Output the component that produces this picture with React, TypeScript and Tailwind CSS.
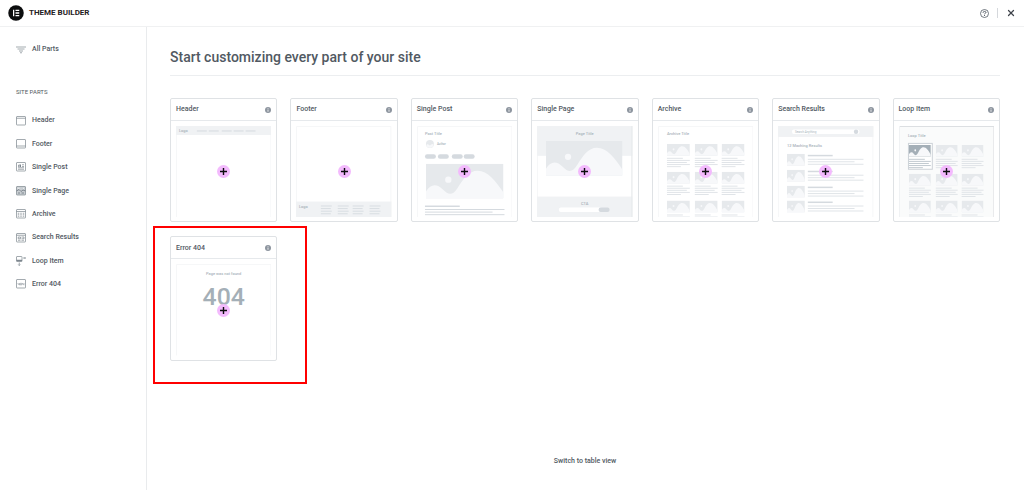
import React, { ReactNode } from "react";
import { X } from "lucide-react";

type Part = {
  title: string;
  icon: ReactNode;
  preview: ReactNode;
  highlighted?: boolean;
};

type BoxProps = { x: number; y: number; w: number; h: number };

function Picture({ x, y, w, h, dark }: BoxProps & { dark?: boolean }) {
  return (
    <svg x={x} y={y} width={w} height={h} viewBox="0 0 78 35" preserveAspectRatio="none">
      <rect width="78" height="35" fill={dark ? "#a4afb7" : "#e6e9ec"} />
      <path
        d="M0 28C5 20 11 20 17 26C23 32 27 32 32 24C38 15 43 7 52 7C62 7 70 17 78 29V35H0Z"
        fill="#f7f8fa"
      />
      <ellipse cx="22.500" cy="16" rx="3.200" ry="3.200" fill="#f7f8fa" />
    </svg>
  );
}

function Lines({ x, y, widths, step, color = "#e0e4e8" }: { x: number; y: number; widths: number[]; step: number; color?: string }) {
  return (
    <>
      {widths.map((w, i) => (
        <rect key={i} x={x} y={y + i * step} width={w} height="1" fill={color} />
      ))}
    </>
  );
}

function Label({ x, y, middle, children }: { x: number; y: number; middle?: boolean; children: ReactNode }) {
  return (
    <text x={x} y={y} fontSize="4" fontWeight="500" fill="#a9b3bb" textAnchor={middle ? "middle" : "start"}>
      {children}
    </text>
  );
}

function Frame({ children }: { children: ReactNode }) {
  return (
    <svg viewBox="0 0 96 92" className="block h-auto w-full">
      <path d="M0.500 92V0.500H95.500V92" fill="none" stroke="#f6f7f8" />
      {children}
    </svg>
  );
}

const headerPreview = (
  <Frame>
    <rect width="96" height="9" fill="#f0f2f4" />
    <Label x={3} y={6}>Logo</Label>
    {[21, 33, 46, 58, 70].map((x) => (
      <rect key={x} x={x} y="4.500" width="10" height="1" fill="#d5dadf" />
    ))}
  </Frame>
);

const footerPreview = (
  <Frame>
    <rect y="76" width="96" height="16" fill="#f0f2f4" />
    <Label x={3} y={83}>Logo</Label>
    {[25, 42, 57, 74].map((x) => (
      <Lines key={x} x={x} y={80} widths={[11, 10, 11, 10]} step={2.6} color="#d8dde2" />
    ))}
  </Frame>
);

const postPreview = (
  <Frame>
    <Label x={8} y={9}>Post Title</Label>
    <circle cx="13" cy="18" r="4" fill="#e6e9ec" />
    <path d="M9.500 19C11 17.500 12 19.500 13 19.500S15 17 16.800 19A4 4 0 0 1 9.500 20Z" fill="#f7f8fa" />
    <text x="20" y="19" fontSize="3" fontWeight="500" fill="#a9b3bb">Author</text>
    {[8, 21, 35, 47].map((x) => (
      <rect key={x} x={x} y="28.500" width="11" height="4.500" rx="2.200" fill="#d5dadf" />
    ))}
    <Picture x={9} y={38} w={78} h={35} />
    <rect x="8" y="80" width="35" height="1.500" fill="#d5dadf" />
    <Lines x={8} y={83.5} widths={[80, 68, 80]} step={2.6} color="#d5dadf" />
  </Frame>
);

const pagePreview = (
  <Frame>
    <rect width="96" height="30" fill="#f0f2f4" />
    <Label x={48} y={9} middle>Page Title</Label>
    <Picture x={9} y={15} w={77} h={35} />
    <rect y="71" width="96" height="21" fill="#f0f2f4" />
    <Label x={48} y={79} middle>CTA</Label>
    <rect x="22" y="82" width="44" height="4.500" rx="2" fill="#fff" />
    <rect x="62" y="82" width="11" height="4.500" rx="2" fill="#d5dadf" />
    <path d="M95.500 0V92" stroke="#e6e9ec" />
  </Frame>
);

const archivePreview = (
  <Frame>
    <Label x={9} y={9}>Archive Title</Label>
    {[9, 37, 64].map((x) =>
      [18, 46, 75].map((y) => (
        <g key={`${x}-${y}`}>
          <Picture x={x} y={y} w={23} h={12} />
          <Lines x={x} y={y + 14} widths={[16, 23, 20, 23, 14]} step={2.1} />
        </g>
      ))
    )}
  </Frame>
);

const searchPreview = (
  <Frame>
    <rect width="96" height="11" fill="#f0f2f4" />
    <rect x="14" y="3.500" width="68" height="4.500" rx="2" fill="#fff" />
    <text x="17" y="6.800" fontSize="3" fill="#a9b3bb">Search Anything</text>
    <circle cx="78.500" cy="5.800" r="2.200" fill="#d5dadf" />
    <Label x={9} y={21}>12 Maching Results</Label>
    {[28, 44, 60, 75].map((y) => (
      <g key={y}>
        <Picture x={9} y={y} w={18} h={12} />
        <rect x="30" y={y + 1} width="25" height="1.500" fill="#d5dadf" />
        <Lines x={30} y={y + 5} widths={[56, 47, 56]} step={2.5} />
      </g>
    ))}
  </Frame>
);

const loopPreview = (
  <Frame>
    <rect width="96" height="92" fill="#fafbfb" />
    <path d="M0 0.500H95.500V92" fill="none" stroke="#dcdfe2" />
    <path d="M0.500 0V92" stroke="#f0f2f4" />
    <Label x={9} y={11}>Loop Title</Label>
    <rect x="9.500" y="17.500" width="24" height="26" fill="#fff" stroke="#ccd2d7" />
    {[10, 37, 63].map((x) =>
      [19, 48, 75].map((y) => {
        const active = x === 10 && y === 19;
        return (
          <g key={`${x}-${y}`}>
            <Picture x={x} y={y} w={22} h={12} dark={active} />
            <Lines x={x} y={y + 14} widths={[16, 22, 20, 22, 14]} step={2.1} color={active ? "#c2cad0" : "#e0e4e8"} />
          </g>
        );
      })
    )}
  </Frame>
);

const errorPreview = (
  <Frame>
    <Label x={48} y={11} middle>Page was not found</Label>
    <text x="48" y="41" fontSize="25" fontWeight="500" fill="#a4afb7" textAnchor="middle">404</text>
  </Frame>
);

function Icon({ children }: { children: ReactNode }) {
  return (
    <svg viewBox="0 0 20 20" className="size-[10px] shrink-0" fill="none" stroke="#7d868e" strokeWidth="1.400" aria-hidden="true">
      {children}
    </svg>
  );
}

const parts: Part[] = [
  {
    title: "Header",
    icon: <Icon><rect x="1" y="1" width="18" height="17" rx="1" /><path d="M1 4.500H19" /></Icon>,
    preview: headerPreview,
  },
  {
    title: "Footer",
    icon: <Icon><rect x="1" y="1" width="18" height="17" rx="1" /><path d="M1 14H19" /></Icon>,
    preview: footerPreview,
  },
  {
    title: "Single Post",
    icon: <Icon><rect x="1" y="1" width="18" height="17" rx="1" /><path d="M5 10V6H7M12 5.500H16M12 9H16M4 11.500H16M4 14.500H16" /><path d="M7 5H10V10H7Z" fill="#7d868e" stroke="none" /></Icon>,
    preview: postPreview,
  },
  {
    title: "Single Page",
    icon: <Icon><rect x="1" y="1" width="18" height="17" rx="1" fill="#c9ced2" /><path d="M1 10L6 7L10 11L14 8L19 10M4 14H8M11 14H16" strokeWidth="2" /><path d="M3 4.500H7M14 4.500H16" stroke="#fff" /></Icon>,
    preview: pagePreview,
  },
  {
    title: "Archive",
    icon: <Icon><rect x="1" y="1" width="18" height="17" rx="1" /><path d="M1 5H19" /><path d="M3.500 8.500H6.500M8.500 8.500H11.500M13.500 8.500H16.500M3.500 11.500H6.500M8.500 11.500H11.500M13.500 11.500H16.500M3.500 14.500H6.500M8.500 14.500H11.500M13.500 14.500H16.500" /></Icon>,
    preview: archivePreview,
  },
  {
    title: "Search Results",
    icon: <Icon><rect x="1" y="1" width="18" height="17" rx="1" /><path d="M1 4.500H19M4.500 8H9V11.500H4.500ZM11 8H16V11.500H11M4 14.500H9M11 14.500H16" /></Icon>,
    preview: searchPreview,
  },
  {
    title: "Loop Item",
    icon: <Icon><rect x="1" y="1" width="11" height="10" rx="1" /><path d="M1 9H12" strokeWidth="3" /><path d="M14 4H19M17 2L19 4L17 6M6.500 13V19M4.500 17L6.500 19L8.500 17" /></Icon>,
    preview: loopPreview,
  },
  {
    title: "Error 404",
    icon: <Icon><rect x="1" y="1" width="18" height="17" rx="1" /><path d="M4 8V10.500H7M7 8V12.500M8.800 8.500H11.200V12H8.800ZM13 8V10.500H16M16 8V12.500" strokeWidth="1" /></Icon>,
    preview: errorPreview,
    highlighted: true,
  },
];

function PartCard({ part }: { part: Part }) {
  return (
    <article className="relative">
      <div className="rounded-xs border border-[#dfe2e5]">
        <div className="flex h-[22px] items-center justify-between border-b border-[#e6e9ec] px-[5px]">
          <h2 className="text-[7px] font-medium">{part.title}</h2>
          <button type="button" aria-label={`${part.title} info`}>
            <svg viewBox="0 0 12 12" className="block size-[6px]" aria-hidden="true">
              <circle cx="6" cy="6" r="6" fill="#8d959f" />
              <path d="M6 2.500V4M6 5V9.500" stroke="#fff" strokeWidth="1.600" />
            </svg>
          </button>
        </div>
        <div className="grid place-items-center px-[5px] pt-[5px] pb-1">
          <div className="col-start-1 row-start-1 w-full">{part.preview}</div>
          <button
            type="button"
            aria-label={`Add ${part.title}`}
            className="relative col-start-1 row-start-1 grid size-[13px] place-items-center rounded-full bg-[#f3bafd]"
          >
            <svg viewBox="0 0 14 14" className="size-[7px]" aria-hidden="true">
              <path d="M7 0V14M0 7H14" stroke="#0c0d0e" strokeWidth="2.800" />
            </svg>
          </button>
        </div>
      </div>
      {part.highlighted && (
        <div className="pointer-events-none absolute -top-[10px] -right-[30px] -bottom-[23px] -left-[17px] border-2 border-[#ff0000]" />
      )}
    </article>
  );
}

export default function App() {
  return (
    <div className="flex min-h-screen flex-col bg-white font-[Roboto,sans-serif] text-[#515962]">
      <header className="flex h-[27px] items-center justify-between border-b border-[#f0f1f2] px-2">
        <div className="flex items-center gap-[5px]">
          <svg viewBox="0 0 32 32" className="size-4" aria-hidden="true">
            <circle cx="16" cy="16" r="15.500" fill="#0c0d0e" />
            <path d="M10 9.500H12.500V22.500H10ZM15 9.500H22.500V12H15ZM15 14.700H22.500V17.300H15ZM15 20H22.500V22.500H15Z" fill="#fff" />
          </svg>
          <h1 className="text-[8px] font-bold text-[#1f2124]">THEME BUILDER</h1>
        </div>
        <div className="flex items-center gap-2">
          <button type="button" aria-label="Help">
            <svg viewBox="0 0 18 18" className="block size-[9px]" fill="none" stroke="#515962" strokeWidth="1.600" aria-hidden="true">
              <circle cx="9" cy="9" r="8" />
              <path d="M6 7.500C6 4 12 4 12 7C12 8.500 9 8.500 9 10.500M9 12V14" strokeWidth="1.900" />
            </svg>
          </button>
          <span className="h-[10px] w-px bg-[#d5d8dc]" />
          <button type="button" aria-label="Close">
            <X className="size-[10px] text-[#3f444b]" strokeWidth={3} />
          </button>
        </div>
      </header>

      <div className="flex flex-1">
        <nav className="w-[147px] shrink-0 border-r border-[#e9ebed] px-4 pt-[11px] text-[7px] font-medium">
          <a href="#all" className="flex h-[23px] items-center gap-[6px]">
            <Icon><path d="M0 4H20M3 8H17M6 12H14M8 15.500H12" /></Icon>
            All Parts
          </a>
          <h2 className="mt-[25px] text-[6px] leading-[12px] font-normal">SITE PARTS</h2>
          <ul className="mt-[11px] flex h-[187px] flex-col justify-between">
            {parts.map((part) => (
              <li key={part.title}>
                <a href={`#${part.title}`} className="flex h-[23px] items-center gap-[6px]">
                  {part.icon}
                  {part.title}
                </a>
              </li>
            ))}
          </ul>
        </nav>

        <main className="flex min-w-0 flex-1 flex-col pr-6 pb-[23px] pl-[23px]">
          <h1 className="mt-5 border-b border-[#eceef0] pb-[7px] text-[14px] leading-[21px] font-medium">
            Start customizing every part of your site
          </h1>
          <section className="mt-[22px] grid grid-cols-7 gap-x-[13px] gap-y-[14px]">
            {parts.map((part) => (
              <PartCard key={part.title} part={part} />
            ))}
          </section>
          <button type="button" className="mt-auto self-center text-[7px] leading-[12px] font-medium">
            Switch to table view
          </button>
        </main>
      </div>
    </div>
  );
}
